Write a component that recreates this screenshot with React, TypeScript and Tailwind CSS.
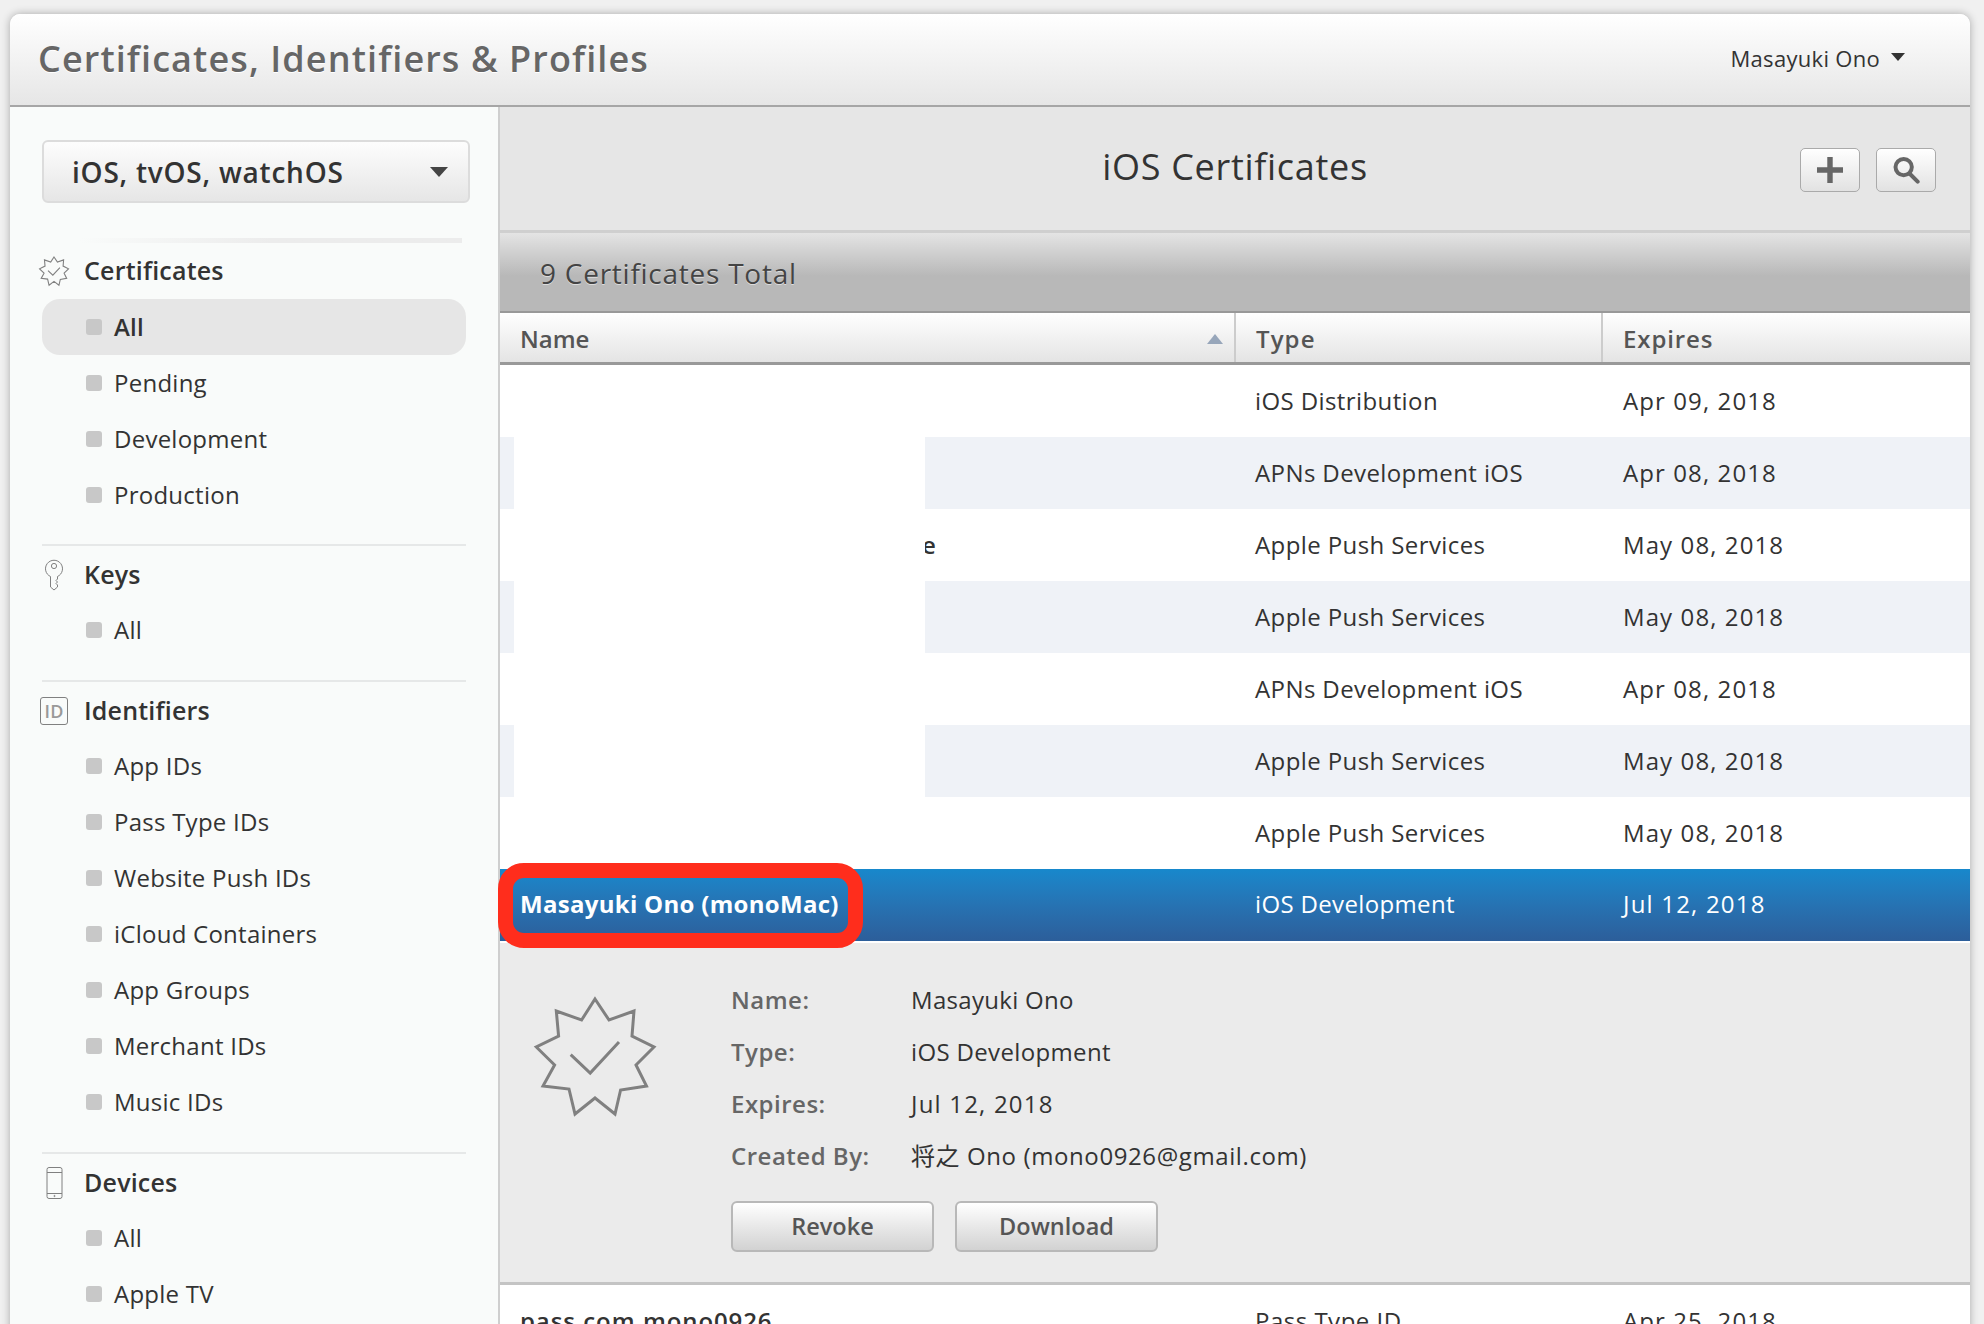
const font = { fontFamily: '"Open Sans", "Noto Sans CJK JP", sans-serif' };

const sections = [
  { title: "Keys", icon: "key", items: ["All"] },
  { title: "Identifiers", icon: "id", items: ["App IDs", "Pass Type IDs", "Website Push IDs", "iCloud Containers", "App Groups", "Merchant IDs", "Music IDs"] },
  { title: "Devices", icon: "phone", items: ["All", "Apple TV"] },
];

const rows = [
  { type: "iOS Distribution", expires: "Apr 09, 2018" },
  { type: "APNs Development iOS", expires: "Apr 08, 2018" },
  { type: "Apple Push Services", expires: "May 08, 2018", tail: "e" },
  { type: "Apple Push Services", expires: "May 08, 2018" },
  { type: "APNs Development iOS", expires: "Apr 08, 2018" },
  { type: "Apple Push Services", expires: "May 08, 2018" },
  { type: "Apple Push Services", expires: "May 08, 2018" },
];

const details = [
  { label: "Name:", value: "Masayuki Ono", track: "tracking-[0.3px]" },
  { label: "Type:", value: "iOS Development", track: "tracking-[0.35px]" },
  { label: "Expires:", value: "Jul 12, 2018", track: "tracking-[1.2px]" },
  { label: "Created By:", value: "将之 Ono (mono0926@gmail.com)", track: "tracking-[0.6px]" },
];

const Badge = ({ className = "", width = 1.5 }: { className?: string; width?: number }) => (
  <svg viewBox="0 0 130 126" className={className} fill="none" stroke="#808080" strokeWidth={width}>
    <polygon points="65,6 79,27 104,18 102,43 124,54 106,72 116.5,93 90.6,97 85,121 65,105 45,121 39,96 13,93 24.6,72 6.3,54 28.6,43 26.3,18 51.6,27" />
    <polyline points="40.7,61.7 60.2,80 89,49" />
  </svg>
);

const SectionIcon = ({ name }: { name: string }) => {
  if (name === "key")
    return (
      <svg viewBox="0 0 20 32" className="w-[20px] h-[32px]" fill="none" stroke="#808080" strokeWidth="1">
        <path d="M6.5 17.5 A8.5 8.5 0 1 1 13.5 17.5 V20 L12 21.5 L13.5 23 L12 24.5 L13.5 26 V28 L10 31 L6.5 28 Z" />
        <circle cx="10" cy="7" r="2.6" />
      </svg>
    );
  if (name === "id")
    return (
      <div className="w-[28px] h-[28px] border border-[#808080] rounded-[3px] flex items-center justify-center text-[18px] leading-none text-[#999]">
        ID
      </div>
    );
  return (
    <svg viewBox="0 0 17 32" className="w-[17px] h-[32px]" fill="none" stroke="#808080" strokeWidth="1">
      <rect x="1" y="0.5" width="15" height="31" rx="2" />
      <path d="M1 5.5 H16 M1 26.5 H16" />
      <circle cx="8.5" cy="29" r="0.6" />
    </svg>
  );
};

const NavItem = ({ label, active }: { label: string; active?: boolean }) => (
  <div className={`h-[56px] ml-[32px] w-[424px] flex items-center pl-[44px] rounded-[18px] text-[24px] tracking-[0.25px] text-[#333] ${active ? "bg-[#e6e6e6] font-semibold" : ""}`}>
    <span className="w-[16px] h-[16px] rounded-[3px] bg-[#c8c8c8] mr-[12px]" />
    {label}
  </div>
);

const Heading = ({ title, icon }: { title: string; icon: React.ReactNode }) => (
  <div className="h-[56px] flex items-center text-[25px] font-semibold tracking-[0.2px] text-[#333]">
    <div className="w-[60px] ml-[14px] flex justify-center">{icon}</div>
    {title}
  </div>
);

const Sidebar = () => (
  <div className="w-[490px] shrink-0 bg-[#f9fbfa] border-r-2 border-[#cfcfcf] pt-[33px]">
    <div className="ml-[32px] w-[428px] h-[63px] rounded-[6px] border-2 border-[#dcdcdc] bg-gradient-to-b from-[#fdfdfd] to-[#e6e6e6] flex items-center justify-between pl-[28px] pr-[20px] text-[28px] font-semibold tracking-[0.77px] text-[#333]">
      iOS, tvOS, watchOS
      <span className="w-0 h-0 border-l-[9px] border-r-[9px] border-t-[10px] border-l-transparent border-r-transparent border-t-[#444]" />
    </div>
    <div className="ml-[70px] w-[382px] h-[5px] mt-[35px] bg-gradient-to-r from-transparent via-[#ececec] to-[#ececec]" />
    <Heading title="Certificates" icon={<Badge className="w-[32px] h-[32px] shrink-0" width={4.5} />} />
    <NavItem label="All" active />
    {["Pending", "Development", "Production"].map((l) => (
      <NavItem key={l} label={l} />
    ))}
    <div className="h-[21px]" />
    {sections.map((s) => (
      <div key={s.title}>
        <div className="h-[3px]">
          <div className="ml-[32px] w-[424px] h-[2px] bg-[#e6e8e8]" />
        </div>
        <Heading title={s.title} icon={<SectionIcon name={s.icon} />} />
        <div className="mt-[-1px]">
          {s.items.map((l) => (
            <NavItem key={l} label={l} />
          ))}
        </div>
        <div className="h-[22px]" />
      </div>
    ))}
  </div>
);

const Row = ({ type, expires, tail, odd }: { type: string; expires: string; tail?: string; odd: boolean }) => (
  <div className={`h-[72px] flex items-center text-[24px] text-[#333] ${odd ? "bg-[#eff2f7]" : "bg-white"}`}>
    <div className="w-[735px] h-full flex items-center shrink-0">
      <div className="w-[14px]" />
      <div className="w-[411px] h-full bg-white relative z-10" />
      {tail && <span className="font-semibold ml-[-3px]">{tail}</span>}
    </div>
    <div className="w-[367px] pl-[20px] shrink-0 tracking-[0.4px] mb-[1px]">{type}</div>
    <div className="pl-[21px] tracking-[1.1px] mb-[1px]">{expires}</div>
  </div>
);

export default function App() {
  return (
    <div style={font} className="h-[1324px] overflow-hidden bg-[#f0f0f0] pt-[14px] pl-[10px] pr-[14px]">
      <div className="h-[1400px] rounded-t-[10px] shadow-[0_0_8px_rgba(0,0,0,0.3)] bg-white flex flex-col">
        <div className="h-[93px] shrink-0 rounded-t-[10px] border-b-2 border-[#a6a6a6] bg-gradient-to-b from-white to-[#e6e6e6] flex items-center justify-between pl-[28px] pr-[65px]">
          <span className="text-[36px] font-semibold tracking-[1.1px] text-[#666] [text-shadow:0_1px_0_#fff] mb-[2px]">Certificates, Identifiers &amp; Profiles</span>
          <div className="flex items-center text-[22px] tracking-[0.3px] text-[#333] mb-[2px]">
            Masayuki Ono
            <span className="ml-[11px] mb-[4px] w-0 h-0 border-l-[7px] border-r-[7px] border-t-[8px] border-l-transparent border-r-transparent border-t-[#333]" />
          </div>
        </div>
        <div className="flex flex-1">
          <Sidebar />
          <div className="flex-1 bg-white relative">
            <div className="h-[123px] bg-[#e6e6e6] flex items-center justify-center relative">
              <span className="text-[36px] tracking-[0.7px] text-[#333] mb-[3px]">iOS Certificates</span>
              <div className="absolute right-[34px] top-[41px] flex gap-[16px]">
                <button className="w-[60px] h-[44px] rounded-[5px] border border-[#aaa] bg-gradient-to-b from-white to-[#e2e2e2] flex items-center justify-center">
                  <svg viewBox="0 0 24 24" className="w-[26px] h-[26px]" fill="#666"><path d="M9.5 0h5v9.5H24v5h-9.5V24h-5v-9.5H0v-5h9.5z" /></svg>
                </button>
                <button className="w-[60px] h-[44px] rounded-[5px] border border-[#aaa] bg-gradient-to-b from-white to-[#e2e2e2] flex items-center justify-center">
                  <svg viewBox="0 0 24 24" className="w-[28px] h-[28px]" fill="none" stroke="#666" strokeWidth="3.4"><circle cx="10" cy="9.5" r="7" /><path d="M15 15l7 7" strokeLinecap="round" /></svg>
                </button>
              </div>
            </div>
            <div className="h-[3px] bg-[#cfcfcf]" />
            <div className="h-[80px] pt-[2px] border-b-2 border-[#999] bg-[linear-gradient(#e4e4e4,#b8b8b8_55%,#b8b8b8)] flex items-center pl-[40px] text-[28px] tracking-[0.75px] text-[#444] [text-shadow:0_1px_0_#ddd]">
              9 Certificates Total
            </div>
            <div className="h-[52px] flex border-b-[3px] border-[#999] bg-gradient-to-b from-white to-[#e4e4e4] text-[24px] font-semibold text-[#555]">
              <div className="w-[736px] shrink-0 flex items-center justify-between pt-[2px] pl-[20px] pr-[11px] border-r-2 border-[#ccc]">
                Name
                <span className="w-0 h-0 border-l-[8px] border-r-[8px] border-b-[10px] border-l-transparent border-r-transparent border-b-[#97a6ba]" />
              </div>
              <div className="w-[367px] shrink-0 flex items-center pt-[2px] pl-[20px] tracking-[1.1px] border-r-2 border-[#ccc]">Type</div>
              <div className="flex items-center pt-[2px] pl-[20px] tracking-[0.9px]">Expires</div>
            </div>
            {rows.map((r, i) => (
              <Row key={i} {...r} odd={i % 2 === 1} />
            ))}
            <div className="h-[72px] flex items-center text-[24px] text-white bg-gradient-to-b from-[#1788cc] to-[#2c5e9a] relative">
              <div className="w-[735px] shrink-0 pl-[20px] font-bold tracking-[0.3px] mb-[2px]">Masayuki Ono (monoMac)</div>
              <div className="w-[367px] shrink-0 pl-[20px] tracking-[0.35px] mb-[2px]">iOS Development</div>
              <div className="pl-[21px] tracking-[1.2px] mb-[2px]">Jul 12, 2018</div>
              <div className="absolute left-[-2px] top-[-6px] z-20 w-[365px] h-[85px] rounded-[26px] border-[15px] border-[#ff2d1c]" />
            </div>
            <div className="h-[2px] bg-white" />
            <div className="h-[342px] bg-[#ebebeb] border-b-[3px] border-[#c4c4c4] flex">
              <Badge className="w-[130px] h-[126px] ml-[30px] mt-[50px] shrink-0" width={3} />
              <div className="ml-[71px] pt-[31px]">
                {details.map((d) => (
                  <div key={d.label} className="h-[52px] flex items-center text-[24px]">
                    <span className="w-[180px] font-semibold tracking-[0.5px] text-[#666]">{d.label}</span>
                    <span className={`${d.track} text-[#333]`}>{d.value}</span>
                  </div>
                ))}
                <div className="flex gap-[21px] mt-[19px]">
                  {["Revoke", "Download"].map((b) => (
                    <button key={b} className="w-[203px] h-[51px] rounded-[6px] border-2 border-[#b8b8b8] bg-gradient-to-b from-white to-[#d2d2d2] text-[23.5px] font-semibold text-[#555]">
                      {b}
                    </button>
                  ))}
                </div>
              </div>
            </div>
            <div className="h-[72px] flex items-center text-[24px] text-[#333] bg-white">
              <div className="w-[735px] shrink-0 pl-[20px] font-semibold tracking-[0.9px]">pass.com.mono0926</div>
              <div className="w-[367px] shrink-0 pl-[20px] tracking-[0.5px]">Pass Type ID</div>
              <div className="pl-[21px] tracking-[1.1px]">Apr 25, 2018</div>
            </div>
          </div>
        </div>
      </div>
    </div>
  );
}
